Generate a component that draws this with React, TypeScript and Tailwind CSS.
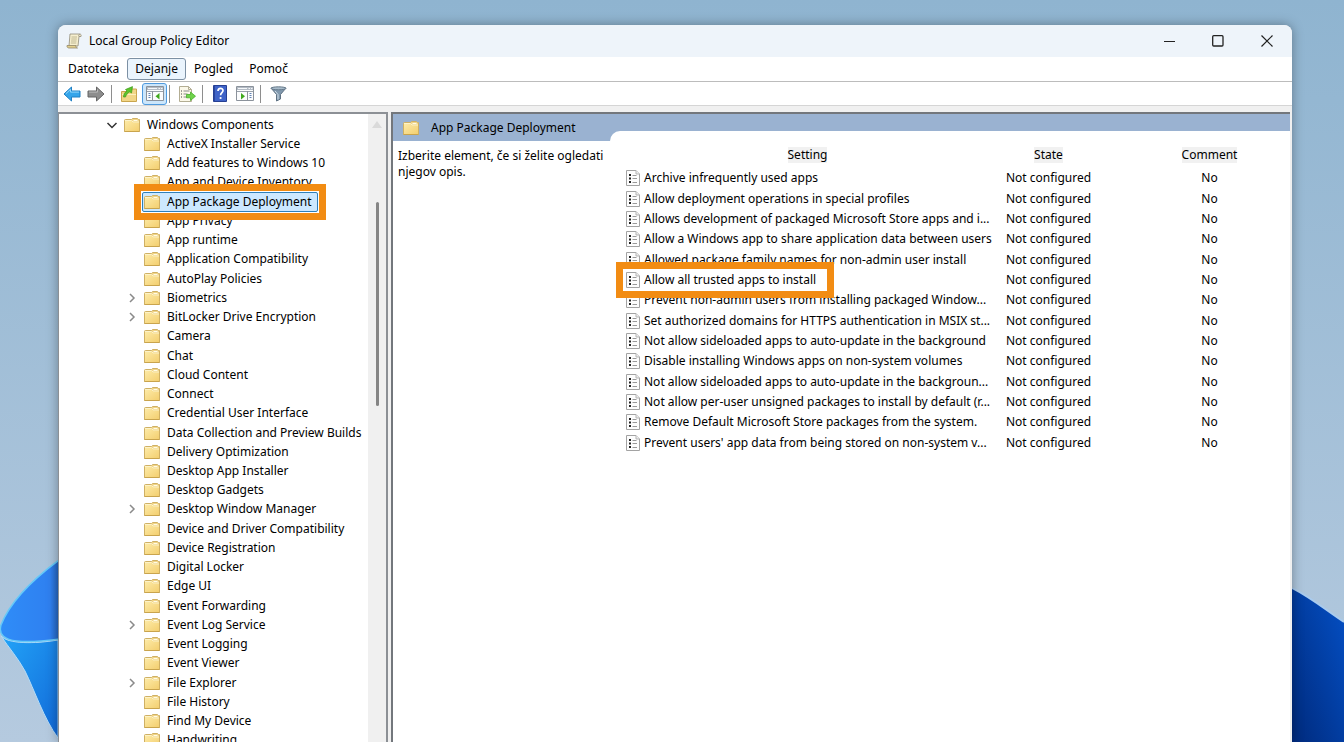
import type { ReactNode } from 'react';
import clsx from 'clsx';

type TreeItem = { name: string; expandable?: boolean; selected?: boolean };

const treeItems: TreeItem[] = [
  { name: 'ActiveX Installer Service' },
  { name: 'Add features to Windows 10' },
  { name: 'App and Device Inventory' },
  { name: 'App Package Deployment', selected: true },
  { name: 'App Privacy' },
  { name: 'App runtime' },
  { name: 'Application Compatibility' },
  { name: 'AutoPlay Policies' },
  { name: 'Biometrics', expandable: true },
  { name: 'BitLocker Drive Encryption', expandable: true },
  { name: 'Camera' },
  { name: 'Chat' },
  { name: 'Cloud Content' },
  { name: 'Connect' },
  { name: 'Credential User Interface' },
  { name: 'Data Collection and Preview Builds' },
  { name: 'Delivery Optimization' },
  { name: 'Desktop App Installer' },
  { name: 'Desktop Gadgets' },
  { name: 'Desktop Window Manager', expandable: true },
  { name: 'Device and Driver Compatibility' },
  { name: 'Device Registration' },
  { name: 'Digital Locker' },
  { name: 'Edge UI' },
  { name: 'Event Forwarding' },
  { name: 'Event Log Service', expandable: true },
  { name: 'Event Logging' },
  { name: 'Event Viewer' },
  { name: 'File Explorer', expandable: true },
  { name: 'File History' },
  { name: 'Find My Device' },
  { name: 'Handwriting' },
];

const settings = [
  'Archive infrequently used apps',
  'Allow deployment operations in special profiles',
  'Allows development of packaged Microsoft Store apps and i...',
  'Allow a Windows app to share application data between users',
  'Allowed package family names for non-admin user install',
  'Allow all trusted apps to install',
  'Prevent non-admin users from installing packaged Window...',
  'Set authorized domains for HTTPS authentication in MSIX st...',
  'Not allow sideloaded apps to auto-update in the background',
  'Disable installing Windows apps on non-system volumes',
  'Not allow sideloaded apps to auto-update in the backgroun...',
  'Not allow per-user unsigned packages to install by default (r...',
  'Remove Default Microsoft Store packages from the system.',
  "Prevent users' app data from being stored on non-system v...",
];

const highlighted = 'Allow all trusted apps to install';

function FolderIcon() {
  return (
    <svg viewBox="0 0 16 14" className="h-[14px] w-4 shrink-0" aria-hidden="true">
      <defs>
        <linearGradient id="folder" x1="0" y1="0" x2="1" y2="1">
          <stop offset="0" stopColor="#fdeaa6" />
          <stop offset="1" stopColor="#f3cf70" />
        </linearGradient>
      </defs>
      <path d="M.5 2.500Q.5 1.500 1.500 1.500H7.500L8.500.5H13.500L14.500 1.500H15.500V13.500H.5z" fill="#f0d488" stroke="#cfb064" />
      <path d="M9.500 2.500h4" stroke="#fffbe6" />
      <path d="M1 3h6.500l1.500 1.500h6V13H1z" fill="url(#folder)" />
      <path d="M1 2.500h6.500l1.500 1.500h6" fill="none" stroke="#fdf3c8" />
      <path d="M.5 13.500h15" stroke="#c9a44d" />
    </svg>
  );
}

function PolicyIcon() {
  return (
    <svg viewBox="0 0 14 16" className="h-4 w-[14px] shrink-0" aria-hidden="true">
      <path d="M.5.5h9.500l3.500 3.500v11.500H.5z" fill="#fdfdfd" stroke="#a3a3a3" />
      <path d="M10 .5V4h3.500" fill="#eee" stroke="#b5b5b5" />
      <path d="M3 4h2v2H3zM3 7.500h2v2H3zM3 11h2v2H3z" fill="#222" />
      <path d="M6.500 5.500h4M6.500 8.500h4.500M6.500 12.500h4.500" stroke="#999" />
    </svg>
  );
}

function ScrollIcon() {
  return (
    <svg viewBox="0 0 16 16" className="size-4" aria-hidden="true">
      <path d="M4 1h9.500c1.500 0 2 1 1.500 2.500h-2l-1 9.500H3z" fill="#f6efcf" stroke="#8f8a78" strokeWidth=".8" />
      <path d="M13 3.500c-.7-.9-.3-2 .8-2.300" fill="none" stroke="#8f8a78" strokeWidth=".8" />
      <path d="M1 12.500h9c-.5 1 .2 2.500 1.500 2.500H3c-1.500 0-2.300-1.200-2-2.500z" fill="#e2cf8d" stroke="#94896a" strokeWidth=".8" />
      <path d="M5.500 4h5.500M5.300 6h5.500M5 8h5.500M4.800 10h5.500" stroke="#b3a983" strokeWidth=".8" />
    </svg>
  );
}

function ArrowIcon({ back }: { back?: boolean }) {
  return back ? (
    <svg viewBox="0 0 18 16" className="h-4 w-[18px]" aria-hidden="true">
      <path d="M1 8l7.500-7v4H17v6H8.500v4z" fill="#35a5ea" stroke="#2180c4" strokeLinejoin="round" />
      <path d="M3 7.600l4.500-4.200v2.700H16" fill="none" stroke="#93d6fa" />
    </svg>
  ) : (
    <svg viewBox="0 0 18 16" className="h-4 w-[18px]" aria-hidden="true">
      <path d="M17 8L9.500 1v4H1v6h8.500v4z" fill="#8d8d8d" stroke="#656565" strokeLinejoin="round" />
      <path d="M2 6.100h8.500V3.400" fill="none" stroke="#b9b9b9" />
    </svg>
  );
}

function UpFolderIcon() {
  return (
    <svg viewBox="0 0 16 16" className="size-4" aria-hidden="true">
      <path d="M.5 5.500h7l2-2.500h6v12.500H.5z" fill="#f2d688" stroke="#c9a54e" />
      <path d="M1 8.500h14" stroke="#fdf0bd" />
      <path d="M2.500 11c0-3 1.500-4.800 3.500-6L4.500 3.500 11.500.6 10.500 7 8.800 5.800C7 6.800 5.200 8.500 4.500 11z" fill="#5cc42c" stroke="#3d9a1a" strokeWidth=".7" />
    </svg>
  );
}

function PaneIcon({ right }: { right?: boolean }) {
  return (
    <svg viewBox="0 0 18 15" className="h-[15px] w-[18px]" aria-hidden="true">
      <path d="M.5.5h17v14H.5z" fill="#fbfcfd" stroke="#8b929b" />
      <path d="M1 1h16v3H1z" fill="#b4bcc6" />
      <path d="M2 2.500h9M12.500 2.500h1.500M15 2.500h1.500" stroke="#f6f8fa" />
      <path d="M1 5.500h16" stroke="#9aa2ac" />
      {right ? (
        <>
          <path d="M11.500 5v9.500" stroke="#8b929b" />
          <path d="M13.500 7.500h2M13.500 9.500h2M13.500 11.500h2" stroke="#6383b5" />
          <path d="M5 7l4 3.200-4 3.200z" fill="#3fa91d" />
        </>
      ) : (
        <>
          <path d="M6.500 5v9.500" stroke="#8b929b" />
          <path d="M2.500 7.500h2M2.500 9.500h2M2.500 11.500h2" stroke="#6383b5" />
          <path d="M13.500 7l-4 3.200 4 3.200z" fill="#3fa91d" />
        </>
      )}
    </svg>
  );
}

function ExportIcon() {
  return (
    <svg viewBox="0 0 18 18" className="size-[18px]" aria-hidden="true">
      <path d="M1.500 1.500h9l3 3v12h-12z" fill="#fbf8e9" stroke="#b3ad93" />
      <path d="M10.500 1.500v3h3" fill="none" stroke="#b3ad93" />
      <path d="M3 6h1M3 9h1M3 12h1" stroke="#444" />
      <path d="M5.500 6h6M5.500 9h4M5.500 12h4" stroke="#8a8a8a" />
      <path d="M8.500 9.500h4V7l5 4.200-5 4.300v-2.700h-4z" fill="#6fd34b" stroke="#48ad28" strokeWidth=".8" />
    </svg>
  );
}

function HelpIcon() {
  return (
    <svg viewBox="0 0 14 17" className="h-[17px] w-[14px]" aria-hidden="true">
      <path d="M.5.5h13v16H.5z" fill="#3f63c8" stroke="#263f93" />
      <path d="M1.500 1v15" stroke="#2a479f" />
      <path d="M5 6c0-3.500 5-3.500 5-.4 0 2-2.400 2.200-2.400 4.700" fill="none" stroke="#fff" strokeWidth="1.700" />
      <circle cx="7.600" cy="13" r="1.100" fill="#fff" />
    </svg>
  );
}

function FilterIcon() {
  return (
    <svg viewBox="0 0 17 16" className="h-4 w-[17px]" aria-hidden="true">
      <path d="M1 2l5.500 6.500V15l4-2V8.500L16 2z" fill="#8199ae" stroke="#5e7182" strokeLinejoin="round" />
      <ellipse cx="8.500" cy="2.300" rx="7.500" ry="1.500" fill="#a9bccb" stroke="#66798a" />
      <path d="M5 5l3 3.500v5" fill="none" stroke="#d4e0ea" />
    </svg>
  );
}

function ToolButton({ label, className, children }: { label: string; className?: string; children: ReactNode }) {
  return (
    <button aria-label={label} className={clsx('flex h-[22px] items-center justify-center', className)}>
      {children}
    </button>
  );
}

function Divider({ className }: { className?: string }) {
  return <span className={clsx('h-[18px] w-px bg-[#8e8e8e]', className)} />;
}

function TitleBar() {
  return (
    <header className="flex h-8 shrink-0 items-center bg-[#eef4fa] pl-2">
      <ScrollIcon />
      <h1 className="ml-[7px] grow">Local Group Policy Editor</h1>
      <div className="flex pb-px">
        <button aria-label="Minimize" className="flex h-[30px] w-12 items-center justify-center">
          <svg viewBox="0 0 12 12" className="size-3">
            <path d="M0 6.500h11" stroke="#222" />
          </svg>
        </button>
        <button aria-label="Maximize" className="flex h-[30px] w-12 items-center justify-center">
          <svg viewBox="0 0 12 12" className="size-3">
            <rect x=".7" y=".7" width="10.300" height="10.300" rx="1" fill="none" stroke="#222" strokeWidth="1.300" />
          </svg>
        </button>
        <button aria-label="Close" className="flex h-[30px] w-[50px] items-center justify-center">
          <svg viewBox="0 0 12 12" className="size-3">
            <path d="M.5.5l11 11M11.500.5l-11 11" stroke="#222" strokeWidth="1.200" />
          </svg>
        </button>
      </div>
    </header>
  );
}

function MenuBar() {
  return (
    <nav className="flex h-[25px] shrink-0 items-center border-b border-[#bcbcbc] bg-white pl-[2px]">
      <button className="h-[22px] px-2">Datoteka</button>
      <button className="h-[22px] rounded-[3px] border border-[#7c90a4] bg-[#eaf4fd] px-[7px]">Dejanje</button>
      <button className="h-[22px] px-2">Pogled</button>
      <button className="h-[22px] px-2">Pomoč</button>
    </nav>
  );
}

function Toolbar() {
  return (
    <div role="toolbar" className="flex h-6 shrink-0 items-center border-b border-[#d5d5d5] bg-white pl-1">
      <ToolButton label="Back" className="w-5">
        <ArrowIcon back />
      </ToolButton>
      <ToolButton label="Forward" className="ml-1 w-5">
        <ArrowIcon />
      </ToolButton>
      <Divider className="ml-[5px]" />
      <ToolButton label="Up one level" className="ml-[7px] w-5">
        <UpFolderIcon />
      </ToolButton>
      <ToolButton label="Show console tree" className="ml-[3px] w-[25px] rounded-[3px] border border-[#4f9ade] bg-[#cce6fb]">
        <PaneIcon />
      </ToolButton>
      <Divider className="ml-[2px]" />
      <ToolButton label="Export list" className="ml-[7px] w-5">
        <ExportIcon />
      </ToolButton>
      <Divider className="ml-[5px]" />
      <ToolButton label="Help" className="ml-[7px] w-5">
        <HelpIcon />
      </ToolButton>
      <ToolButton label="Show action pane" className="ml-[5px] w-5">
        <PaneIcon right />
      </ToolButton>
      <Divider className="ml-[5px]" />
      <ToolButton label="Filter" className="ml-[7px] w-5">
        <FilterIcon />
      </ToolButton>
    </div>
  );
}

function TreeRow({ item }: { item: TreeItem }) {
  return (
    <li className="flex items-center gap-1 pl-[67px]">
      <span className="flex w-3 shrink-0 justify-center">
        {item.expandable && (
          <svg viewBox="0 0 8 10" className="h-[10px] w-2" aria-hidden="true">
            <path d="M2 1l4 4-4 4" fill="none" stroke="#8a8a8a" strokeWidth="1.500" />
          </svg>
        )}
      </span>
      <button
        className={clsx(
          'relative flex h-5 items-center gap-[7px] border pr-[5px] pl-px whitespace-nowrap',
          item.selected ? 'z-10 rounded-[2px] border-[#2f7fb8] bg-[#cce8ff]' : 'border-transparent'
        )}
      >
        {item.selected && (
          <span className="pointer-events-none absolute -inset-[9px] border-[7px] border-[#f28c13]" />
        )}
        <FolderIcon />
        {item.name}
      </button>
    </li>
  );
}

function PolicyTree() {
  return (
    <aside className="flex w-[330px] shrink-0 overflow-hidden border-t-2 border-r-2 border-l border-[#8c9095] bg-white">
      <ul className="grid h-[636px] grow auto-rows-fr pt-px">
        <li className="flex items-center gap-1 pl-[47px]">
          <svg viewBox="0 0 12 12" className="size-3" aria-hidden="true">
            <path d="M1.500 4l4.500 4.500L10.500 4" fill="none" stroke="#333" strokeWidth="1.500" />
          </svg>
          <button className="flex h-5 items-center gap-[7px] border border-transparent pl-px">
            <FolderIcon />
            Windows Components
          </button>
        </li>
        {treeItems.map((item) => (
          <TreeRow key={item.name} item={item} />
        ))}
      </ul>
      <div className="flex w-[18px] shrink-0 flex-col items-center bg-[#f0f0f0] pt-[7px]">
        <svg viewBox="0 0 10 7" className="h-[7px] w-[10px]" aria-hidden="true">
          <path d="M5 0l5 7H0z" fill="#dadada" />
        </svg>
        <span className="mt-[74px] h-[204px] w-[3px] rounded-full bg-[#858585]" />
      </div>
    </aside>
  );
}

function SettingsTable() {
  return (
    <table className="h-[306px] w-full table-fixed">
      <thead>
        <tr>
          <th className="h-[21px] w-[381px] p-0 align-top font-normal">
            <span className="inline-block bg-[#f1f1f1]">Setting</span>
          </th>
          <th className="w-[101px] p-0 align-top font-normal">
            <span className="inline-block bg-[#f1f1f1]">State</span>
          </th>
          <th className="p-0 pl-[30px] align-top font-normal">
            <span className="inline-block bg-[#f1f1f1]">Comment</span>
          </th>
        </tr>
      </thead>
      <tbody>
        {settings.map((name) => (
          <tr key={name}>
            <td className="p-0 pl-[9px]">
              <div className={clsx('relative flex w-fit items-center gap-1 whitespace-nowrap', name === highlighted && 'z-10')}>
                {name === highlighted && (
                  <span className="pointer-events-none absolute -inset-y-[10px] -right-[18px] -left-[10px] -z-10 border-[7px] border-[#f28c13] bg-white" />
                )}
                <PolicyIcon />
                {name}
              </div>
            </td>
            <td className="p-0 text-center whitespace-nowrap">Not configured</td>
            <td className="p-0 pl-[30px] text-center">No</td>
          </tr>
        ))}
      </tbody>
    </table>
  );
}

function DetailsPane() {
  return (
    <section className="flex grow border-t-2 border-l-2 border-[#73777c] bg-[#9ab2d1]">
      <div className="flex w-[217px] shrink-0 flex-col">
        <div className="flex h-[27px] shrink-0 items-center gap-3 pt-px pl-[10px]">
          <FolderIcon />
          <h2>App Package Deployment</h2>
        </div>
        <p className="grow bg-white pt-[7px] pl-[5px]">Izberite element, če si želite ogledati njegov opis.</p>
      </div>
      <div className="mt-[17px] grow rounded-tl-[10px] bg-white pt-4 pl-[7px]">
        <SettingsTable />
      </div>
    </section>
  );
}

function Wallpaper() {
  return (
    <>
      <svg viewBox="0 0 58 190" className="absolute bottom-0 left-0 h-[190px] w-[58px]" aria-hidden="true">
        <defs>
          <linearGradient id="petal" x1="0" y1="0" x2="1" y2="0">
            <stop offset="0" stopColor="#2f8df8" />
            <stop offset=".85" stopColor="#2f80f0" />
            <stop offset="1" stopColor="#2565c0" />
          </linearGradient>
          <linearGradient id="petalLow" x1="0" y1="0" x2="1" y2="1">
            <stop offset="0" stopColor="#22a4f8" />
            <stop offset="1" stopColor="#1269d8" />
          </linearGradient>
        </defs>
        <path d="M58 88C34 92 8 92 1 84c8 12 17 22 24 35 9 18 19 48 33 67z" fill="url(#petalLow)" stroke="#b5dcf7" />
        <path d="M59 8C32 28 10 50 1 73c-6 20 29 18 58 14z" fill="url(#petal)" stroke="#66c9f8" strokeWidth="1.500" />
      </svg>
      <svg viewBox="0 0 52 154" className="absolute right-0 bottom-0 h-[154px] w-[52px]" aria-hidden="true">
        <defs>
          <linearGradient id="bloom" x1="0" y1="1" x2="1" y2="0">
            <stop offset="0" stopColor="#002a7c" />
            <stop offset="1" stopColor="#0450c6" />
          </linearGradient>
        </defs>
        <path d="M0 0c18 9 34 22 52 34v120H0z" fill="url(#bloom)" />
        <path d="M0 0c18 9 34 22 52 34" fill="none" stroke="#a9cbee" strokeWidth="2" />
      </svg>
    </>
  );
}

export default function App() {
  return (
    <main className="relative flex h-screen overflow-hidden bg-linear-to-b from-[#8fb4d0] to-[#b5cadf] pt-[25px] pr-[52px] pl-[58px] font-['Noto_Sans',sans-serif] text-[12px] leading-4 text-black">
      <Wallpaper />
      <div className="relative flex grow flex-col overflow-hidden rounded-t-lg bg-[#f0f0f0] shadow-[0_0_12px_rgba(0,0,0,0.35)]">
        <TitleBar />
        <MenuBar />
        <Toolbar />
        <div className="flex min-h-0 grow gap-[3px] pt-[6px] pr-[2px]">
          <PolicyTree />
          <DetailsPane />
        </div>
      </div>
    </main>
  );
}
